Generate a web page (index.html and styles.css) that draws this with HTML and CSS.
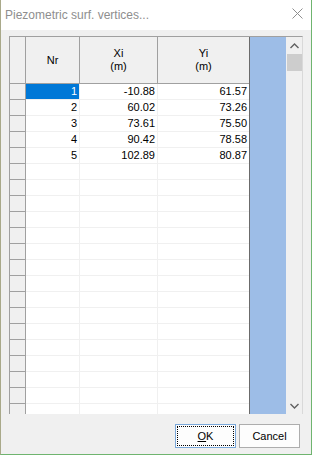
FILE: index.html
```html
<!DOCTYPE html>
<html lang="en">
<head>
    <meta charset="UTF-8">
    <title>Piezometric surf. vertices...</title>
    <link rel="stylesheet" href="styles.css">
</head>
<body>
    <div class="window">
        <div class="titlebar">
            <span class="title">Piezometric surf. vertices...</span>
            <svg class="close" width="11" height="11" viewBox="0 0 11 11">
                <path d="M0.5 0.5 L10.5 10.5 M10.5 0.5 L0.5 10.5" stroke="#8e8e8e" stroke-width="1" fill="none"/>
            </svg>
        </div>
        <div class="content">
            <div class="grid">
                <div class="table-wrap">
                    <table class="table">
                        <thead>
                            <tr>
                                <th class="rowhead"></th>
                                <th class="col-nr">Nr</th>
                                <th class="col-xi">Xi<br>(m)</th>
                                <th class="col-yi">Yi<br>(m)</th>
                            </tr>
                        </thead>
                        <tbody id="rows">
                            <tr><td class="rowhead"></td><td class="selected">1</td><td>-10.88</td><td>61.57</td></tr>
                            <tr><td class="rowhead"></td><td>2</td><td>60.02</td><td>73.26</td></tr>
                            <tr><td class="rowhead"></td><td>3</td><td>73.61</td><td>75.50</td></tr>
                            <tr><td class="rowhead"></td><td>4</td><td>90.42</td><td>78.58</td></tr>
                            <tr><td class="rowhead"></td><td>5</td><td>102.89</td><td>80.87</td></tr>
                        </tbody>
                    </table>
                    <div class="filler"></div>
                </div>
                <div class="scrollbar">
                    <svg class="arrow" width="9" height="6" viewBox="0 0 9 6">
                        <path d="M0.5 5 L4.5 1 L8.5 5" stroke="#606060" stroke-width="1.4" fill="none"/>
                    </svg>
                    <div class="thumb"></div>
                    <div class="track"></div>
                    <svg class="arrow" width="9" height="6" viewBox="0 0 9 6">
                        <path d="M0.5 1 L4.5 5 L8.5 1" stroke="#606060" stroke-width="1.4" fill="none"/>
                    </svg>
                </div>
            </div>
            <div class="buttons">
                <button class="btn btn-default"><span><u>O</u>K</span></button>
                <button class="btn">Cancel</button>
            </div>
        </div>
    </div>

    <script>
        // empty rows below the data
        const tbody = document.getElementById('rows');
        for (let i = 0; i < 16; i++) {
            const tr = document.createElement('tr');
            tr.innerHTML = '<td class="rowhead"></td><td></td><td></td><td></td>';
            tbody.appendChild(tr);
        }
    </script>
</body>
</html>
```

FILE: styles.css
```css
body, html {
    margin: 0;
    padding: 0;
    width: 313px;
    height: 456px;
    overflow: hidden;
    background-color: #ffffff;
    font-family: "Liberation Sans", Arial, sans-serif;
}
.window {
    width: 312px;
    height: 455px;
    box-sizing: border-box;
    border-left: 1px solid #a9a98a;
    border-right: 1px solid #6fb46f;
    border-bottom: 1px solid #6fb46f;
    display: flex;
    flex-direction: column;
    background-color: #f0f0f0;
}
.titlebar {
    height: 29px;
    flex: none;
    background-color: #ffffff;
    display: flex;
    align-items: center;
    justify-content: space-between;
    padding: 0 8px 1px 4px;
}
.title {
    font-size: 12px;
    color: #8e8e8e;
}
.close {
    display: block;
    margin-bottom: 3px;
}
.content {
    flex: 1;
    padding: 6px 8px 0 8px;
    display: flex;
    flex-direction: column;
}
.grid {
    height: 378px;
    display: flex;
    border-top: 1px solid #a0a0a0;
    border-left: 1px solid #a0a0a0;
    border-right: 1px solid #d9d9d9;
    box-sizing: border-box;
    background-color: #ffffff;
}
.table-wrap {
    flex: 1;
    display: flex;
    overflow: hidden;
}
.table {
    border-collapse: collapse;
    font-size: 11px;
    color: #000000;
    table-layout: fixed;
    flex: none;
    align-self: flex-start;
}
.table th {
    height: 46px;
    padding: 0;
    background-color: #f0f0f0;
    font-weight: normal;
    border-right: 1px solid #a0a0a0;
    border-bottom: 1px solid #a0a0a0;
    line-height: 13px;
    text-align: center;
    vertical-align: middle;
}
.table td {
    height: 15px;
    padding: 0 2px 0 0;
    border-right: 1px solid #f0f0f0;
    border-bottom: 1px solid #f0f0f0;
    text-align: right;
    line-height: 15px;
    box-sizing: content-box;
}
.table .rowhead {
    width: 15px;
    background-color: #f0f0f0;
    border-right: 1px solid #a0a0a0;
    border-bottom: 1px solid #a0a0a0;
    padding: 0;
}
.col-nr {
    width: 53px;
}
.col-xi {
    width: 77px;
}
.col-yi {
    width: 91px;
}
.table th.col-yi, .table td:last-child {
    border-right: none;
}
.table td.selected {
    background-color: #0078d7;
    color: #ffffff;
}
.filler {
    flex: 1;
    background-color: #9dbde7;
    border-left: 1px solid #6b6b6b;
}
.scrollbar {
    width: 16px;
    flex: none;
    background-color: #f0f0f0;
    display: flex;
    flex-direction: column;
    align-items: center;
}
.arrow {
    display: block;
    margin: 6px 0 5px 0;
}
.thumb {
    width: 15px;
    height: 17px;
    margin-left: 1px;
    background-color: #cdcdcd;
}
.track {
    flex: 1;
}
.buttons {
    display: flex;
    justify-content: flex-end;
    gap: 3px;
    margin-top: 10px;
    padding-right: 3px;
}
.btn {
    width: 61px;
    height: 24px;
    margin: 0;
    padding: 0;
    border: 1px solid #adadad;
    background-color: #fdfdfd;
    font-family: "Liberation Sans", Arial, sans-serif;
    font-size: 11px;
    color: #000000;
}
.btn-default {
    border-color: #7aa7d8;
    padding: 1px;
}
.btn-default span {
    display: flex;
    align-items: center;
    justify-content: center;
    height: 100%;
    border: 1px dotted #000000;
    box-sizing: border-box;
}
```
